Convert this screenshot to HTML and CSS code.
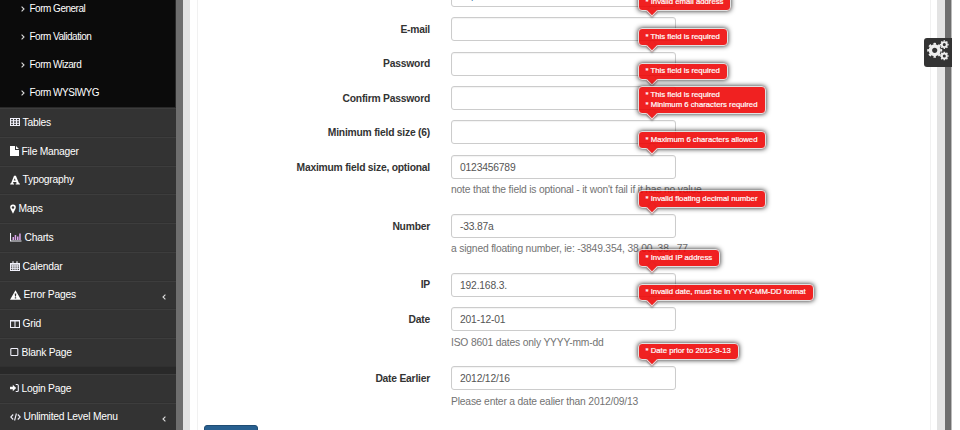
FILE: index.html
```html
<!DOCTYPE html>
<html lang="en">
<head>
<meta charset="utf-8">
<title>Form Validation</title>
<link rel="stylesheet" href="styles.css">
</head>
<body>
<div class="page">
  <nav class="sidebar">
    <ul class="submenu">
      <li><svg class="chev" viewBox="0 0 4 6"><path d="M.6.6 3 3 .6 5.4"/></svg><span>Form General</span></li>
      <li><svg class="chev" viewBox="0 0 4 6"><path d="M.6.6 3 3 .6 5.4"/></svg><span>Form Validation</span></li>
      <li><svg class="chev" viewBox="0 0 4 6"><path d="M.6.6 3 3 .6 5.4"/></svg><span>Form Wizard</span></li>
      <li><svg class="chev" viewBox="0 0 4 6"><path d="M.6.6 3 3 .6 5.4"/></svg><span>Form WYSIWYG</span></li>
    </ul>
    <ul class="menu">
      <li><svg class="icon" width="10" height="10" viewBox="0 0 10 10"><path class="line" d="M.5 1.5h9v7h-9zM.5 3.800h9M.5 6.200h9M3.500 1.500v7M6.500 1.500v7"/></svg><span>Tables</span></li>
      <li><svg class="icon" width="9" height="10" viewBox="0 0 9 10"><path d="M0 0h5v4h4v6H0zM6 0l3 3H6z"/></svg><span>File Manager</span></li>
      <li><svg class="icon" width="10" height="10" viewBox="0 0 10 10"><path fill-rule="evenodd" d="M4 .7h1.900L9 8.300l.9.3v.9H5.700v-.9l1-.2-.5-1.500H3.400l-.5 1.400 1.100.3v.9H.2v-.9l.9-.3zM4.700 3.200 3.800 5.600h1.900z"/></svg><span>Typography</span></li>
      <li><svg class="icon" width="6" height="10" viewBox="0 0 6 10"><path fill-rule="evenodd" d="M3 .5a2.800 2.800 0 0 0-2.800 3C.2 5 2 7.500 3 9.700 4 7.500 5.800 5 5.800 3.500A2.800 2.800 0 0 0 3 .5zm0 1.700a1.300 1.300 0 1 1 0 2.600 1.300 1.300 0 0 1 0-2.600z"/></svg><span>Maps</span></li>
      <li><svg class="icon" width="12" height="10" viewBox="0 0 12 10"><path class="line" d="M.5 1v8h11"/><path class="bars" d="M2.500 5H4v3H2.500zM4.700 3h1.500v5H4.700zM7 4.500h1.500V8H7zM9.200 1.500h1.500V8H9.200z"/></svg><span>Charts</span></li>
      <li><svg class="icon" width="10" height="10" viewBox="0 0 10 10"><path class="line" d="M.5 2.500h9v7h-9zM.5 5h9M.5 7.300h9M2.800 4v5.500M5 4v5.500M7.200 4v5.500M3 .3v2M7 .3v2M.5 3.300h9"/></svg><span>Calendar</span></li>
      <li><svg class="icon" width="11" height="10" viewBox="0 0 11 10"><path fill-rule="evenodd" d="M5.500.3 11 9.700H0zM4.700 3.500l.3 3h1l.3-3zM4.800 7.300v1.200h1.400V7.300z"/></svg><span>Error Pages</span><svg class="chev more" viewBox="0 0 4 6"><path d="M3.400.6 1 3l2.400 2.400"/></svg></li>
      <li><svg class="icon" width="10" height="10" viewBox="0 0 10 10"><path class="line" d="M.5 1.500h9v7h-9zM5 1.500v7M.5 2h9"/></svg><span>Grid</span></li>
      <li><svg class="icon" width="9" height="10" viewBox="0 0 9 10"><rect class="line" x=".8" y="1.500" width="7" height="7" rx=".8"/></svg><span>Blank Page</span></li>
    </ul>
    <ul class="menu second">
      <li><svg class="icon" width="9" height="10" viewBox="0 0 9 10"><path d="M0 3.700h2.800V1.800L6.200 5 2.800 8.200V6.300H0z"/><path class="line" d="M5.700 1.500h1.600q1 0 1 1v5q0 1-1 1H5.700"/></svg><span>Login Page</span></li>
      <li><svg class="icon" width="11" height="10" viewBox="0 0 11 10"><path class="line" d="M3.200 2.500.8 5l2.400 2.500M7.800 2.500 10.200 5 7.800 7.500M6.400 1.500 4.600 8.500"/></svg><span>Unlimited Level Menu</span><svg class="chev more" viewBox="0 0 4 6"><path d="M3.400.6 1 3l2.400 2.400"/></svg></li>
    </ul>
  </nav>
  <main class="main">
    <div class="content">
      <form class="panel">
        <div class="row"><span class="label"></span><div class="field"><div class="input link">http://</div></div></div>
        <div class="row"><label class="label">E-mail</label><div class="field"><div class="input"></div><div class="tip">* Invalid email address</div></div></div>
        <div class="row"><label class="label">Password</label><div class="field"><div class="input"></div><div class="tip">* This field is required</div></div></div>
        <div class="row"><label class="label">Confirm Password</label><div class="field"><div class="input"></div><div class="tip">* This field is required</div></div></div>
        <div class="row"><label class="label">Minimum field size (6)</label><div class="field"><div class="input"></div><div class="tip">* This field is required<br>* Minimum 6 characters required</div></div></div>
        <div class="row"><label class="label">Maximum field size, optional</label><div class="field"><div class="input">0123456789</div><p class="hint">note that the field is optional - it won't fail if it has no value</p><div class="tip">* Maximum 6 characters allowed</div></div></div>
        <div class="row"><label class="label">Number</label><div class="field"><div class="input">-33.87a</div><p class="hint">a signed floating number, ie: -3849.354, 38.00, 38, .77</p><div class="tip">* Invalid floating decimal number</div></div></div>
        <div class="row"><label class="label">IP</label><div class="field"><div class="input">192.168.3.</div><div class="tip">* Invalid IP address</div></div></div>
        <div class="row"><label class="label">Date</label><div class="field"><div class="input">201-12-01</div><p class="hint">ISO 8601 dates only YYYY-mm-dd</p><div class="tip">* Invalid date, must be in YYYY-MM-DD format</div></div></div>
        <div class="row"><label class="label">Date Earlier</label><div class="field"><div class="input">2012/12/16</div><p class="hint">Please enter a date ealier than 2012/09/13</p><div class="tip">* Date prior to 2012-9-13</div></div></div>
        <div class="submit"></div>
      </form>
    </div>
  </main>
  <div class="settings">
    <svg width="24" height="24" viewBox="0 0 24 24">
      <g transform="translate(8.700 11.300)"><circle r="4.300" class="ring big"/><circle r="6.500" class="teeth" pathLength="16"/></g>
      <g transform="translate(18.300 5.600)"><circle r="2.500" class="ring"/><circle r="3.700" class="teeth small" pathLength="16"/></g>
      <g transform="translate(18.300 17)"><circle r="2.500" class="ring"/><circle r="3.700" class="teeth small" pathLength="16"/></g>
    </svg>
  </div>
</div>
</body>
</html>
```
FILE: styles.css
```css
* { box-sizing: border-box; }
body {
  margin: 0;
  height: 430px;
  overflow: hidden;
  background: #fff;
  font-family: "Liberation Sans", Arial, sans-serif;
  font-size: 10.3px;
  letter-spacing: -.18px;
  color: #333;
}
ul, p { margin: 0; padding: 0; list-style: none; }
.page {
  position: relative;
  display: flex;
  width: 952px;
  height: 430px;
  overflow: hidden;
}
.sidebar {
  flex: none;
  width: 176px;
  background: #292929;
  color: #fff;
}
.submenu {
  height: 108px;
  background: #0b0b0b;
  border-right: 1px solid #292929;
  border-bottom: 1px solid #292929;
  overflow: hidden;
  font-size: 10px;
  letter-spacing: -.5px;
}
.submenu li {
  display: flex;
  align-items: center;
  height: 28px;
  padding-left: 20.5px;
  gap: 5px;
}
.submenu li:first-child { margin-top: -5.5px; }
.chev {
  flex: none;
  width: 4px;
  height: 6px;
  fill: none;
  stroke: #ddd;
  stroke-width: 1.1;
}
.menu li {
  display: flex;
  align-items: center;
  height: 28.75px;
  padding: 0 10px;
  gap: 2.5px;
  background: #333;
  border-top: 1px solid #3d3d3d;
  border-bottom: 1px solid #303030;
}
.menu { letter-spacing: -.24px; }
.second { margin-top: 7px; }
.icon { flex: none; fill: #fff; }
.line { fill: none; stroke: #f0f0fa; stroke-width: 1.1; }
.bars { fill: #dca6ed; }
.more { margin: 4px 0 0 auto; }
.main {
  width: 776px;
  padding: 0 7px;
  background: linear-gradient(90deg, #6e6e6e 0 7px, #fff 7px 769px, #6e6e6e 769px 775px, #bbb 775px);
}
.content {
  height: 430px;
  border: solid #e3e3e3;
  border-width: 0 8px 0 7px;
  padding: 0 6px 0 7px;
}
.panel {
  display: flow-root;
  height: 430px;
  border: solid #f1f1f1;
  border-width: 0 1px;
}
.row {
  display: flex;
  margin-bottom: 10.35px;
}
.row:first-child { margin-top: -16.9px; }
.label {
  flex: none;
  width: 232px;
  margin-right: 21px;
  text-align: right;
  font-weight: bold;
  letter-spacing: -.22px;
  line-height: 14px;
  padding-top: 5.7px;
}
.field {
  position: relative;
  width: 225px;
}
.input {
  height: 24px;
  border: 1px solid #ccc;
  border-radius: 3px;
  padding-left: 8px;
  line-height: 23px;
  color: #555;
  background: #fff;
  box-shadow: inset 0 1px 1px rgba(0, 0, 0, .05);
}
.link { color: #3c7aa8; }
.hint {
  height: 24.65px;
  padding-top: 4.4px;
  line-height: 14px;
  color: #737373;
  white-space: nowrap;
}
.tip {
  position: absolute;
  z-index: 2;
  left: 186.5px;
  bottom: calc(100% + 6px);
  padding: 2.500px 7px;
  border: 1.500px solid #ddd;
  border-radius: 4px;
  background: #ee0101;
  color: #fff;
  font-size: 7.75px;
  letter-spacing: 0;
  line-height: 10.500px;
  -webkit-text-stroke: .2px #fff;
  white-space: nowrap;
  box-shadow: 0 0 5px #000;
  opacity: .87;
}
.field:has(.hint) .tip { bottom: auto; top: -23.500px; }
.tip::after {
  content: "";
  position: absolute;
  left: 9.5px;
  top: 100%;
  width: 7px;
  height: 7px;
  margin-top: -3px;
  background: #ee0101;
  border: solid #ddd;
  border-width: 0 1.500px 1.500px 0;
  transform: rotate(45deg);
  box-shadow: 1px 1px 2px rgba(0, 0, 0, .5);
}
.submit {
  width: 54px;
  height: 24px;
  margin: 10px 0 0 6px;
  border: 1px solid #204d74;
  border-radius: 3px;
  background: #286090;
}
.settings {
  position: absolute;
  right: 0;
  top: 38px;
  width: 28px;
  height: 29px;
  padding: 1px 0 0 2px;
  border-radius: 3px 0 0 3px;
  background: #333;
}
.ring { fill: none; stroke: #eee; stroke-width: 1.900; }
.big { stroke-width: 3.400; }
.teeth { fill: none; stroke: #eee; stroke-width: 2; stroke-dasharray: 1 1; stroke-dashoffset: .5; }
.small { stroke-width: 1.300; }
```
